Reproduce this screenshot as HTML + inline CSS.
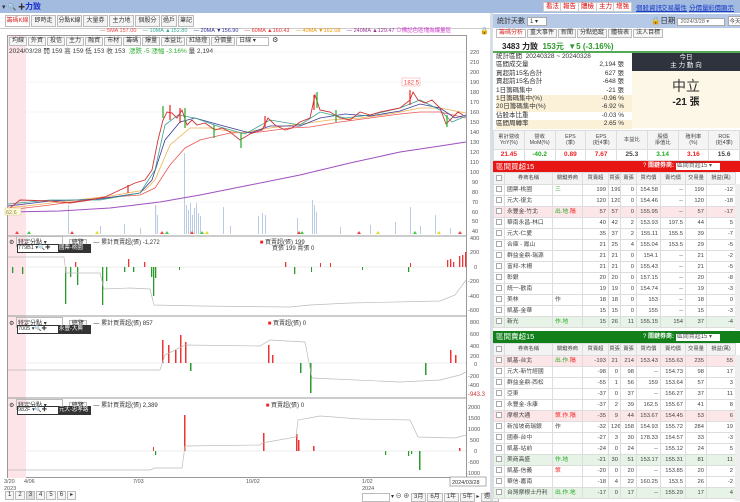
<!DOCTYPE html>
<html><head><meta charset="utf-8"><style>
*{margin:0;padding:0;box-sizing:border-box}
body{width:740px;height:501px;overflow:hidden;background:#fff;font-family:"Liberation Sans","Noto Sans CJK TC",sans-serif;font-size:7px;color:#333;position:relative}
.a{position:absolute;white-space:nowrap}
.tab{position:absolute;top:15px;height:12px;width:25px;overflow:hidden;border:1px solid #bbb;background:#f4f4f4;font-size:6px;line-height:10px;text-align:center}
.tb{display:inline-block;border:1px solid #bbb;background:#f6f6f6;font-size:6px;line-height:7px;padding:0 2px;margin-right:1px}
.btn{position:absolute;top:2px;height:10px;background:#fff;border:1px solid #ccc;color:#d00;font-size:6.5px;line-height:8px;padding:0 2px}
.lk{position:absolute;top:2px;color:#1a3cc8;text-decoration:underline;font-size:6.5px}
table{border-collapse:collapse;position:absolute;font-size:5.8px;table-layout:fixed}
td{border:1px solid #ddd;height:11px;line-height:9px;padding:0 2px;text-align:right;color:#444;white-space:nowrap;overflow:hidden}
td.n{text-align:left}
.hdr td{background:#f3f3f3;text-align:center;height:12px;font-size:5.3px;padding:0}
.pk td{background:#fde6e8}.gr td{background:#e6f3e6}
.cb{display:inline-block;width:6px;height:6px;border:1px solid #aaa;background:#fff;vertical-align:middle}
.r{color:#e22}.g{color:#2a2}
.st{position:absolute;left:496px;width:136px;font-size:6.5px;height:8.4px;line-height:8.4px}
.st b{position:absolute;right:8px;font-weight:normal}
.ft td{text-align:center;padding:0;font-size:5.3px;line-height:6.5px}
</style></head><body>
<div class="a" style="left:0;top:0;width:740px;height:13px;background:#a3bbdf"></div>
<div class="a" style="left:2px;top:2px;font-size:7px;color:#333">▾ 🔍 ✚</div>
<div class="a" style="left:25px;top:1px;font-size:8px;color:#1a2fd0;font-weight:bold">力致</div>
<div class="btn" style="left:543px">看法</div><div class="btn" style="left:560px">報告</div><div class="btn" style="left:578px">體檢</div><div class="btn" style="left:596px">主力</div><div class="btn" style="left:613px">增強</div>
<div class="lk" style="left:636px">個股資訊</div><div class="lk" style="left:661px">交易屬性</div><div class="lk" style="left:689px">分價量</div><div class="lk" style="left:708px">彩價顯示</div>
<div class="tab" style="left:5px;color:#d33;background:#fff">籌碼K線</div>
<div class="tab" style="left:31px">即時走勢</div><div class="tab" style="left:57px">分點K線</div><div class="tab" style="left:83px">大量券商</div><div class="tab" style="left:109px">主力地圖</div><div class="tab" style="left:135px">個股分析</div><div class="tab" style="left:161px;width:16px">過戶</div><div class="tab" style="left:178px;width:16px">筆記</div>
<div class="a" style="left:0;top:28px;width:490px;border-top:1px solid #ccc"></div>
<div class="a" style="top:27px;left:100px;font-size:5.5px;line-height:8px">
<span style="color:#e44">— 5MA 157.00</span>&nbsp;&nbsp;&nbsp;&nbsp;<span style="color:#3a9">— 10MA ▲152.80</span>&nbsp;&nbsp;&nbsp;&nbsp;<span style="color:#339">— 20MA ▼156.90</span>&nbsp;&nbsp;&nbsp;&nbsp;<span style="color:#e33">— 60MA ▲160.43</span>&nbsp;&nbsp;&nbsp;&nbsp;<span style="color:#e90">— 40MA ▼162.08</span>&nbsp;&nbsp;&nbsp;&nbsp;<span style="color:#939">— 240MA ▲129.47</span> <span style="color:#c3c">⊙標記色區塊為爆量區</span></div>
<div class="a" style="left:480px;top:27px;font-size:7px">🔒</div>
<div class="a" style="left:7px;top:35px;width:460px;height:443px;border:1px solid #999"></div>
<div class="a" style="left:8px;top:36px;width:18px;height:442px;background:#fde4e8"></div>
<div class="a" style="left:9px;top:36px">
<span class="tb">均線</span><span class="tb">外資</span><span class="tb">投信</span><span class="tb">主力</span><span class="tb">融資</span><span class="tb">市材</span><span class="tb">籌碼</span><span class="tb">爆量</span><span class="tb">本益比</span><span class="tb">紅綠燈</span><span class="tb">分價量</span><span class="tb" style="width:33px;background:#fff">日線 ▾</span> ⚙</div>
<div class="a" style="left:9px;top:45px;font-size:6.5px">2024/03/28 開 159 高 159 低 153 收 153 &nbsp;<span class="g">漲跌 -5 漲幅 -3.16%</span> 量 2,194</div>
<svg class="a" style="left:0;top:0" width="490" height="501">
<g stroke="#eee" stroke-width="0.6">
<line x1="26" y1="52" x2="466" y2="52"/><line x1="26" y1="82" x2="466" y2="82"/><line x1="26" y1="112" x2="466" y2="112"/><line x1="26" y1="142" x2="466" y2="142"/><line x1="26" y1="172" x2="466" y2="172"/><line x1="26" y1="202" x2="466" y2="202"/>
<line x1="26" y1="267" x2="466" y2="267" stroke="#ddd"/><line x1="26" y1="363" x2="466" y2="363" stroke="#ddd"/><line x1="26" y1="451" x2="466" y2="451" stroke="#ddd"/>
</g>
<line x1="7" y1="236" x2="467" y2="236" stroke="#999"/><line x1="7" y1="316" x2="467" y2="316" stroke="#999"/><line x1="7" y1="398" x2="467" y2="398" stroke="#999"/>
<g fill="#b9cce3">
<rect x="68" y="205" width="1" height="29"/><rect x="124" y="224" width="1" height="10"/><rect x="155" y="205" width="1.2" height="29"/><rect x="157" y="215" width="1" height="19"/><rect x="184" y="153" width="1" height="81"/><rect x="186" y="205" width="1" height="29"/><rect x="188" y="210" width="1" height="24"/><rect x="190" y="203" width="1" height="31"/><rect x="192" y="215" width="1" height="19"/><rect x="194" y="208" width="1" height="26"/><rect x="196" y="203" width="1" height="31"/><rect x="198" y="213" width="1" height="21"/><rect x="200" y="216" width="1" height="18"/><rect x="223" y="207" width="1" height="27"/><rect x="258" y="216" width="1" height="18"/><rect x="262" y="213" width="1" height="21"/><rect x="265" y="215" width="1" height="19"/><rect x="297" y="218" width="1" height="16"/><rect x="312" y="200" width="1" height="34"/><rect x="314" y="205" width="1" height="29"/><rect x="316" y="212" width="1" height="22"/><rect x="395" y="222" width="1" height="12"/><rect x="410" y="207" width="1" height="27"/><rect x="435" y="215" width="1" height="19"/>
<rect x="100" y="226" width="1" height="8"/><rect x="140" y="228" width="1" height="6"/><rect x="230" y="226" width="1" height="8"/><rect x="340" y="227" width="1" height="7"/><rect x="370" y="225" width="1" height="9"/><rect x="420" y="226" width="1" height="8"/><rect x="450" y="228" width="1" height="6"/>
</g>
<polyline fill="none" stroke="#a050c0" stroke-width="1" points="8,212 60,211 110,208 160,202 200,195 250,185 300,175 350,163 400,152 440,146 466,142"/>
<polyline fill="none" stroke="#e55" stroke-width="0.8" points="8,210 50,205 100,198 140,195 155,188 170,165 185,148 200,140 230,133 260,132 290,128 310,127 340,122 370,118 400,114 420,112 440,112 466,118"/>
<polyline fill="none" stroke="#f0b050" stroke-width="0.8" points="8,208 60,202 110,196 145,190 155,180 170,145 190,128 210,128 240,133 270,128 300,124 330,120 360,118 390,114 420,108 440,108 466,113"/>
<polyline fill="none" stroke="#3a3a9a" stroke-width="0.8" points="8,206 50,201 100,199 140,193 152,180 165,140 180,122 195,118 220,125 250,133 270,126 300,126 320,118 345,114 370,116 400,111 420,104 440,108 455,118 466,115"/>
<polyline fill="none" stroke="#3aa090" stroke-width="0.8" points="8,204 50,200 100,200 140,193 155,170 165,125 178,115 195,118 220,127 245,134 270,120 300,125 320,112 345,118 370,115 400,108 420,100 440,110 452,122 466,116"/>
<polyline fill="none" stroke="#c33" stroke-width="0.9" points="10,208 20,200 50,201 70,203 90,200 105,197 120,190 135,183 145,180 152,170 158,140 163,120 167,112 172,113 177,118 182,110 187,125 192,120 197,125 205,123 215,130 222,128 230,132 240,140 250,134 262,130 268,118 275,125 285,130 292,128 300,122 310,118 315,95 320,110 330,112 340,118 350,120 360,112 370,115 380,112 390,110 400,108 410,100 413,92 418,100 425,103 432,100 440,108 446,124 452,118 458,112 463,115"/>
<g stroke="#2a2" stroke-width="1.2"><line x1="163" y1="106" x2="163" y2="118"/><line x1="185" y1="108" x2="185" y2="128"/><line x1="241" y1="133" x2="241" y2="148"/><line x1="317" y1="92" x2="317" y2="108"/><line x1="447" y1="115" x2="447" y2="127"/><line x1="214" y1="125" x2="214" y2="138"/><line x1="336" y1="110" x2="336" y2="122"/></g>
<g stroke="#e22" stroke-width="1.2"><line x1="170" y1="105" x2="170" y2="120"/><line x1="180" y1="108" x2="180" y2="123"/><line x1="314" y1="95" x2="314" y2="110"/><line x1="410" y1="90" x2="410" y2="105"/><line x1="128" y1="185" x2="128" y2="193"/><line x1="265" y1="116" x2="265" y2="127"/></g>
<rect x="402" y="78" width="18" height="8" fill="#fff" stroke="#f99" stroke-width="0.5"/><text x="404" y="84.5" font-size="6" fill="#e44">182.5</text>
<rect x="5" y="208" width="16" height="7" fill="#fffbe0" stroke="#cc8" stroke-width="0.5"/><text x="6" y="214" font-size="5.5" fill="#883">62.6</text>
<g fill="#e44"><path d="M15 234l2-3 2 3z"/><path d="M70 234l2-3 2 3z"/><path d="M160 234l2-3 2 3z"/><path d="M190 234l2-3 2 3z"/><path d="M297 234l2-3 2 3z"/><path d="M357 234l2-3 2 3z"/><path d="M458 234l2-3 2 3z"/></g>
<g fill="#4c4"><path d="M27 234l2-3 2 3z"/><path d="M165 234l2-3 2 3z"/><path d="M200 234l2-3 2 3z"/><path d="M300 234l2-3 2 3z"/><path d="M413 234l2-3 2 3z"/></g>
<g fill="#dd2"><path d="M95 234l2-3 2 3z"/><path d="M205 234l2-3 2 3z"/><path d="M376 234l2-3 2 3z"/><path d="M437 234l2-3 2 3z"/></g>
<g fill="#2a9a2a"><rect x="12" y="267" width="1.3" height="6"/><rect x="22" y="267" width="1.3" height="7"/><rect x="65" y="267" width="1.3" height="37"/><rect x="70" y="267" width="1.3" height="10"/><rect x="77" y="267" width="1.3" height="18"/><rect x="102" y="267" width="1.3" height="38"/><rect x="106" y="267" width="1.3" height="14"/><rect x="124" y="267" width="1.3" height="5"/><rect x="133" y="267" width="1.3" height="5"/><rect x="151" y="267" width="1.3" height="10"/><rect x="153" y="267" width="1.3" height="29"/><rect x="155" y="267" width="1.3" height="11"/><rect x="179" y="267" width="1" height="3"/><rect x="294" y="267" width="1.3" height="7"/><rect x="311" y="267" width="1" height="5"/><rect x="362" y="267" width="1" height="3"/><rect x="408" y="267" width="1.3" height="5"/></g>
<g fill="#e33"><rect x="75" y="262" width="1.3" height="5"/><rect x="128" y="259" width="1.3" height="8"/><rect x="144" y="262" width="1.3" height="5"/><rect x="285" y="262" width="1.3" height="5"/><rect x="320" y="263" width="1" height="4"/><rect x="330" y="263" width="1" height="4"/><rect x="410" y="263" width="1" height="4"/><rect x="447" y="260" width="1.3" height="7"/><rect x="450" y="259" width="1.3" height="8"/><rect x="453" y="262" width="1.3" height="5"/><rect x="459" y="256" width="1.3" height="11"/><rect x="462" y="255" width="1.3" height="12"/><rect x="465" y="252" width="1.3" height="15"/></g>
<polyline fill="none" stroke="#bbb" stroke-width="0.7" points="8,257 64,257 66,273 100,273 104,289 130,288 150,289 154,305 200,306 290,307 310,305 350,303 440,301 455,295 466,280"/>
<g fill="#e33"><rect x="162" y="340" width="1.5" height="23"/><rect x="168" y="345" width="1.5" height="18"/><rect x="175" y="350" width="1.5" height="13"/><rect x="180" y="335" width="1.5" height="28"/><rect x="185" y="342" width="1.5" height="21"/><rect x="268" y="345" width="1.5" height="18"/><rect x="272" y="355" width="1.5" height="8"/><rect x="450" y="350" width="1.5" height="13"/><rect x="455" y="355" width="1.5" height="8"/></g>
<g fill="#2a9a2a"><rect x="310" y="363" width="1.5" height="30"/><rect x="300" y="363" width="1.5" height="10"/><rect x="190" y="363" width="1.5" height="8"/><rect x="425" y="363" width="1.5" height="12"/></g>
<polyline fill="none" stroke="#bbb" stroke-width="0.7" points="8,370 160,370 165,355 185,345 260,346 270,340 305,342 312,378 400,382 440,380 460,375 466,372"/>
<g fill="#e33"><rect x="184" y="415" width="1.5" height="36"/><rect x="263" y="433" width="1.5" height="18"/><rect x="296" y="434" width="1.5" height="17"/><rect x="298" y="440" width="1.5" height="11"/><rect x="313" y="446" width="1.5" height="5"/><rect x="153" y="447" width="1" height="4"/><rect x="459" y="448" width="1.5" height="3"/></g>
<g fill="#2a9a2a"><rect x="155" y="451" width="1.2" height="4"/><rect x="385" y="451" width="1.2" height="4"/><rect x="408" y="451" width="1.2" height="5"/><rect x="411" y="451" width="1.2" height="3"/><rect x="419" y="451" width="1.5" height="19"/></g>
<polyline fill="none" stroke="#bbb" stroke-width="0.7" points="8,470 150,470 155,468 182,468 185,446 260,445 262,443 296,437 298,420 320,416 360,419 410,420 418,437 455,438 466,435"/>
<g font-size="5.5" fill="#555">
<text x="470" y="54">220</text><text x="470" y="64">210</text><text x="470" y="74">200</text><text x="470" y="84">190</text><text x="470" y="94">180</text><text x="470" y="104">170</text><text x="470" y="114">160</text><text x="470" y="124">150</text><text x="470" y="134">140</text><text x="470" y="144">130</text><text x="470" y="154">120</text><text x="470" y="164">110</text><text x="470" y="174">100</text><text x="472" y="184">90</text><text x="472" y="194">80</text><text x="472" y="204">70</text><text x="472" y="214">60</text><text x="472" y="223">50</text><text x="472" y="233">40</text>
<text x="470" y="240">400</text><text x="470" y="254">200</text><text x="474" y="269">0</text><text x="468" y="283">-200</text><text x="468" y="298">-400</text><text x="468" y="312">-600</text>
<text x="470" y="324">800</text><text x="470" y="336">600</text><text x="470" y="348">400</text><text x="470" y="358">200</text><text x="474" y="366">0</text><text x="468" y="378">-200</text><text x="468" y="387">-400</text><text x="468" y="396" fill="#c33" font-size="6">-943.3</text>
<text x="468" y="409">2000</text><text x="468" y="420">1500</text><text x="468" y="431">1000</text><text x="470" y="442">500</text><text x="474" y="453">0</text><text x="468" y="464">-500</text><text x="466" y="475">-1000</text>
<text x="4" y="483">3/20</text><text x="4" y="490">2023</text><text x="24" y="483">4/06</text><text x="133" y="483">7/03</text><text x="246" y="483">10/02</text><text x="362" y="483">1/02</text><text x="362" y="490">2024</text>
</g>
<rect x="450" y="477" width="36" height="9" fill="#fff" stroke="#777" stroke-width="0.6"/><text x="452" y="484" font-size="5.5" fill="#333">2024/03/28</text>
</svg>
<div class="a" style="left:9px;top:236px;font-size:6px">⚙ <span style="display:inline-block;width:47px;border:1px solid #bbb;padding-left:1px">特定分點 ▾</span> <span class="tb" style="margin-left:4px">總覽</span> <span style="margin-left:4px">— 累計買賣超(張) -1,272</span><span style="margin-left:100px"><span class="r">■</span> 買賣超(張) 199</span></div>
<div class="a" style="left:272px;top:243px;font-size:6px">買張 199 賣張 0</div>
<div class="a" style="left:17px;top:244px;width:74px;height:9px;background:#333;font-size:5.5px;color:#fff;line-height:9px"><span style="display:inline-block;width:40px;background:#fff;color:#333;margin:1px;line-height:7px">779B1 ▾🔍✚</span>國票-桃園</div>
<div class="a" style="left:9px;top:317px;font-size:6px">⚙ <span style="display:inline-block;width:47px;border:1px solid #bbb;padding-left:1px">特定分點 ▾</span> <span class="tb" style="margin-left:4px">總覽</span> <span style="margin-left:4px">— 累計買賣超(張) 857</span><span style="margin-left:115px"><span class="r">■</span> 買賣超(張) 0</span></div>
<div class="a" style="left:17px;top:325px;width:74px;height:9px;background:#333;font-size:5.5px;color:#fff;line-height:9px"><span style="display:inline-block;width:40px;background:#fff;color:#333;margin:1px;line-height:7px">7005 ▾🔍✚</span>永豐-大興</div>
<div class="a" style="left:9px;top:399px;font-size:6px">⚙ <span style="display:inline-block;width:47px;border:1px solid #bbb;padding-left:1px">特定分點 ▾</span> <span class="tb" style="margin-left:4px">總覽</span> <span style="margin-left:4px">— 累計買賣超(張) 2,389</span><span style="margin-left:108px"><span class="r">■</span> 買賣超(張) 0</span></div>
<div class="a" style="left:17px;top:406px;width:74px;height:9px;background:#333;font-size:5.5px;color:#fff;line-height:9px"><span style="display:inline-block;width:40px;background:#fff;color:#333;margin:1px;line-height:7px">982F ▾🔍✚</span>元大-忠孝路</div>
<div class="a" style="left:5px;top:491px;font-size:6px"><span class="tb">1</span><span class="tb">2</span><span class="tb" style="background:#ddd">3</span><span class="tb">4</span><span class="tb">5</span><span class="tb">6</span><span class="tb">▸</span></div>
<div class="a" style="left:362px;top:491px;font-size:6px"><span class="tb" style="width:28px;background:#fff">&nbsp;</span>▾ ⊖ ⊕ <span class="tb">3月</span><span class="tb">6月</span><span class="tb">1年</span><span class="tb">5年</span>▸ <span class="tb">週價</span></div>
<div class="a" style="left:490px;top:13px;width:3px;height:488px;background:#d8dde6"></div>
<div class="a" style="left:493px;top:14px;width:247px;height:14px;background:#b6c9e6"></div>
<div class="a" style="left:497px;top:16px;font-size:7px">統計天數 <span style="display:inline-block;width:20px;background:#fff;border:1px solid #aaa;font-size:6px;padding-left:2px">1 ▾</span></div>
<div class="a" style="left:651px;top:15px;font-size:7.5px">🔒日期 <span style="display:inline-block;width:48px;background:#fff;border:1px solid #aaa;font-size:5.5px;padding-left:2px;color:#666">2024/3/28 ▾</span> <span style="display:inline-block;background:#fff;border:1px solid #aaa;font-size:5.5px;padding:0 1px">今天</span></div>
<div class="a" style="left:496px;top:29px;font-size:6px"><span class="tb" style="color:#d33;background:#fff">籌碼分析</span><span class="tb">重大事件</span><span class="tb">新聞</span><span class="tb">分點追蹤</span><span class="tb">體檢表</span><span class="tb">法人目標</span></div>
<div class="a" style="left:502px;top:41px;font-size:8px;font-weight:bold;color:#222">3483 力致 &nbsp;<span style="color:#2a9a2a">153元 &nbsp;▼5 (-3.16%)</span></div>
<div class="a" style="left:493px;top:51px;width:247px;height:2px;background:#5a5"></div>
<div class="a" style="left:632px;top:53px;width:108px;height:18px;background:#2e333d;color:#fff;font-size:6.5px;text-align:center;line-height:8px;padding-top:1px">今日<br>主 力 動 向</div>
<div class="a" style="left:632px;top:71px;width:108px;height:57px;background:#fdf7e7"></div>
<div class="a" style="left:632px;top:76px;width:108px;text-align:center;font-size:14px;color:#333">中立</div>
<div class="a" style="left:632px;top:93px;width:108px;text-align:center;font-size:10px;font-weight:bold;color:#222">-21 張</div>
<div class="st" style="top:53px">統計區間 &nbsp;20240328 ~ 20240328</div>
<div class="st" style="top:61.4px">區間成交量<b>2,194 張</b></div>
<div class="st" style="top:69.8px">買超前15名合計<b>627 張</b></div>
<div class="st" style="top:78.2px">賣超前15名合計<b>-648 張</b></div>
<div class="st" style="top:86.6px">1日籌碼集中<b>-21 張</b></div>
<div class="st" style="top:95px;background:#fbf0d8">1日籌碼集中(%)<b>-0.96 %</b></div>
<div class="st" style="top:103.4px;background:#fbf0d8">20日籌碼集中(%)<b>-6.92 %</b></div>
<div class="st" style="top:111.8px">佔股本比重<b>-0.03 %</b></div>
<div class="st" style="top:120.2px;background:#fbf0d8">區間周轉率<b>2.65 %</b></div>
<table class="ft" style="left:493px;top:130px;width:247px">
<tr><td style="height:19px;background:#f4f4f4">累計營收<br>YoY(%)</td><td style="background:#f4f4f4">營收<br>MoM(%)</td><td style="background:#f4f4f4">EPS<br>(季)</td><td style="background:#f4f4f4">EPS<br>(近4季)</td><td style="background:#f4f4f4">本益比</td><td style="background:#f4f4f4">股價<br>淨值比</td><td style="background:#f4f4f4">殖利率<br>(%)</td><td style="background:#f4f4f4">ROE<br>(近4季)</td></tr>
<tr style="font-weight:bold"><td style="font-size:6.5px;height:11px" class="r">21.45</td><td style="font-size:6.5px" class="g">-40.2</td><td style="font-size:6.5px" class="r">0.89</td><td style="font-size:6.5px" class="r">7.67</td><td style="font-size:6.5px">25.3</td><td style="font-size:6.5px" class="g">3.14</td><td style="font-size:6.5px" class="r">3.16</td><td style="font-size:6.5px">15.6</td></tr></table>
<div class="a" style="left:493px;top:161px;width:247px;height:11px;background:#e81515;color:#fff;font-size:7.5px;line-height:11px;padding-left:3px">區間買超15<span style="position:absolute;left:150px;font-size:6px">? <b>關鍵券商:</b> <span style="display:inline-block;width:44px;background:#fff;color:#555;line-height:7px;padding-left:1px">區間買超15 ▾</span></span></div>
<table style="left:493px;top:172px;width:242px">
<colgroup><col style="width:11px"><col style="width:48px"><col style="width:30px"><col style="width:26px"><col style="width:12px"><col style="width:16px"><col style="width:24px"><col style="width:25px"><col style="width:21px"><col style="width:29px"></colgroup>
<tr class="hdr"><td><span class="cb"></span></td><td>券商名稱</td><td>關鍵券商</td><td>買賣超</td><td>買張</td><td>賣張</td><td>買均價</td><td>賣均價</td><td>交易量</td><td>損益(萬)</td></tr>
<tr><td><span class="cb"></span></td><td class="n">國票-桃園</td><td class="n g">三</td><td>199</td><td>199</td><td>0</td><td>154.58</td><td>--</td><td>199</td><td>-12</td></tr>
<tr><td><span class="cb"></span></td><td class="n">元大-復北</td><td></td><td>120</td><td>120</td><td>0</td><td>154.46</td><td>--</td><td>120</td><td>-18</td></tr>
<tr class="pk"><td><span class="cb"></span></td><td class="n">永豐金-竹北</td><td class="n"><span class="g">出.地</span><span class="r">.隔</span></td><td>57</td><td>57</td><td>0</td><td>155.95</td><td>--</td><td>57</td><td>-17</td></tr>
<tr><td><span class="cb"></span></td><td class="n">華南永昌-林口</td><td></td><td>40</td><td>42</td><td>2</td><td>153.93</td><td>197.5</td><td>44</td><td>5</td></tr>
<tr><td><span class="cb"></span></td><td class="n">元大-仁愛</td><td></td><td>35</td><td>37</td><td>2</td><td>155.11</td><td>155.5</td><td>39</td><td>-7</td></tr>
<tr><td><span class="cb"></span></td><td class="n">合庫 - 鳳山</td><td></td><td>21</td><td>25</td><td>4</td><td>155.04</td><td>153.5</td><td>29</td><td>-5</td></tr>
<tr><td><span class="cb"></span></td><td class="n">群益金鼎-瑞源</td><td></td><td>21</td><td>21</td><td>0</td><td>154.1</td><td>--</td><td>21</td><td>-2</td></tr>
<tr><td><span class="cb"></span></td><td class="n">富邦-木柵</td><td></td><td>21</td><td>21</td><td>0</td><td>155.43</td><td>--</td><td>21</td><td>-5</td></tr>
<tr><td><span class="cb"></span></td><td class="n">彰銀</td><td></td><td>20</td><td>20</td><td>0</td><td>157.15</td><td>--</td><td>20</td><td>-8</td></tr>
<tr><td><span class="cb"></span></td><td class="n">統一-歡南</td><td></td><td>19</td><td>19</td><td>0</td><td>154.74</td><td>--</td><td>19</td><td>-3</td></tr>
<tr><td><span class="cb"></span></td><td class="n">美林</td><td class="n">作</td><td>18</td><td>18</td><td>0</td><td>153</td><td>--</td><td>18</td><td>0</td></tr>
<tr><td><span class="cb"></span></td><td class="n">凱基-金華</td><td></td><td>15</td><td>15</td><td>0</td><td>155</td><td>--</td><td>15</td><td>-3</td></tr>
<tr class="gr"><td><span class="cb"></span></td><td class="n">新光</td><td class="n g">作.地</td><td>15</td><td>26</td><td>11</td><td>155.15</td><td>154</td><td>37</td><td>-4</td></tr>
</table>
<div class="a" style="left:735px;top:184px;width:5px;height:146px;background:#eee"></div>
<div class="a" style="left:493px;top:331px;width:247px;height:12px;background:#12801a;color:#fff;font-size:7.5px;line-height:12px;padding-left:3px">區間賣超15<span style="position:absolute;left:150px;font-size:6px">? <b>關鍵券商:</b> <span style="display:inline-block;width:44px;background:#fff;color:#555;line-height:7px;padding-left:1px">區間賣超15 ▾</span></span></div>
<table style="left:493px;top:343px;width:242px">
<colgroup><col style="width:11px"><col style="width:48px"><col style="width:30px"><col style="width:26px"><col style="width:12px"><col style="width:16px"><col style="width:24px"><col style="width:25px"><col style="width:21px"><col style="width:29px"></colgroup>
<tr class="hdr"><td><span class="cb"></span></td><td>券商名稱</td><td>關鍵券商</td><td>買賣超</td><td>買張</td><td>賣張</td><td>買均價</td><td>賣均價</td><td>交易量</td><td>損益(萬)</td></tr>
<tr class="pk"><td><span class="cb"></span></td><td class="n">凱基-台北</td><td class="n"><span class="g">出.作</span><span class="r">.隔</span></td><td>-193</td><td>21</td><td>214</td><td>153.43</td><td>155.63</td><td>235</td><td>55</td></tr>
<tr><td><span class="cb"></span></td><td class="n">元大-新竹經國</td><td></td><td>-98</td><td>0</td><td>98</td><td>--</td><td>154.73</td><td>98</td><td>17</td></tr>
<tr><td><span class="cb"></span></td><td class="n">群益金鼎-西松</td><td></td><td>-55</td><td>1</td><td>56</td><td>159</td><td>153.64</td><td>57</td><td>3</td></tr>
<tr><td><span class="cb"></span></td><td class="n">亞東</td><td></td><td>-37</td><td>0</td><td>37</td><td>--</td><td>156.27</td><td>37</td><td>11</td></tr>
<tr><td><span class="cb"></span></td><td class="n">永豐金-永康</td><td></td><td>-37</td><td>2</td><td>39</td><td>162.5</td><td>155.67</td><td>41</td><td>8</td></tr>
<tr class="pk"><td><span class="cb"></span></td><td class="n">摩根大通</td><td class="n r">策.作.隔</td><td>-35</td><td>9</td><td>44</td><td>153.67</td><td>154.45</td><td>53</td><td>6</td></tr>
<tr><td><span class="cb"></span></td><td class="n">新加坡商瑞銀</td><td class="n">作</td><td>-32</td><td>126</td><td>158</td><td>154.93</td><td>155.72</td><td>284</td><td>19</td></tr>
<tr><td><span class="cb"></span></td><td class="n">國泰-台中</td><td></td><td>-27</td><td>3</td><td>30</td><td>178.33</td><td>154.57</td><td>33</td><td>-3</td></tr>
<tr><td><span class="cb"></span></td><td class="n">凱基-站前</td><td></td><td>-24</td><td>0</td><td>24</td><td>--</td><td>155.12</td><td>24</td><td>5</td></tr>
<tr class="gr"><td><span class="cb"></span></td><td class="n">美商高盛</td><td class="n g">作.地</td><td>-21</td><td>30</td><td>51</td><td>153.17</td><td>155.31</td><td>81</td><td>11</td></tr>
<tr><td><span class="cb"></span></td><td class="n">凱基-信義</td><td class="n r">策</td><td>-20</td><td>0</td><td>20</td><td>--</td><td>153.85</td><td>20</td><td>2</td></tr>
<tr><td><span class="cb"></span></td><td class="n">華信-嘉南</td><td></td><td>-18</td><td>4</td><td>22</td><td>160.25</td><td>153.5</td><td>26</td><td>-2</td></tr>
<tr class="gr"><td><span class="cb"></span></td><td class="n">台灣摩根士丹利</td><td class="n g">出.作.地</td><td>-17</td><td>0</td><td>17</td><td>--</td><td>155.29</td><td>17</td><td>4</td></tr>
</table>
<div class="a" style="left:735px;top:355px;width:5px;height:146px;background:#eee"></div>
</body></html>
